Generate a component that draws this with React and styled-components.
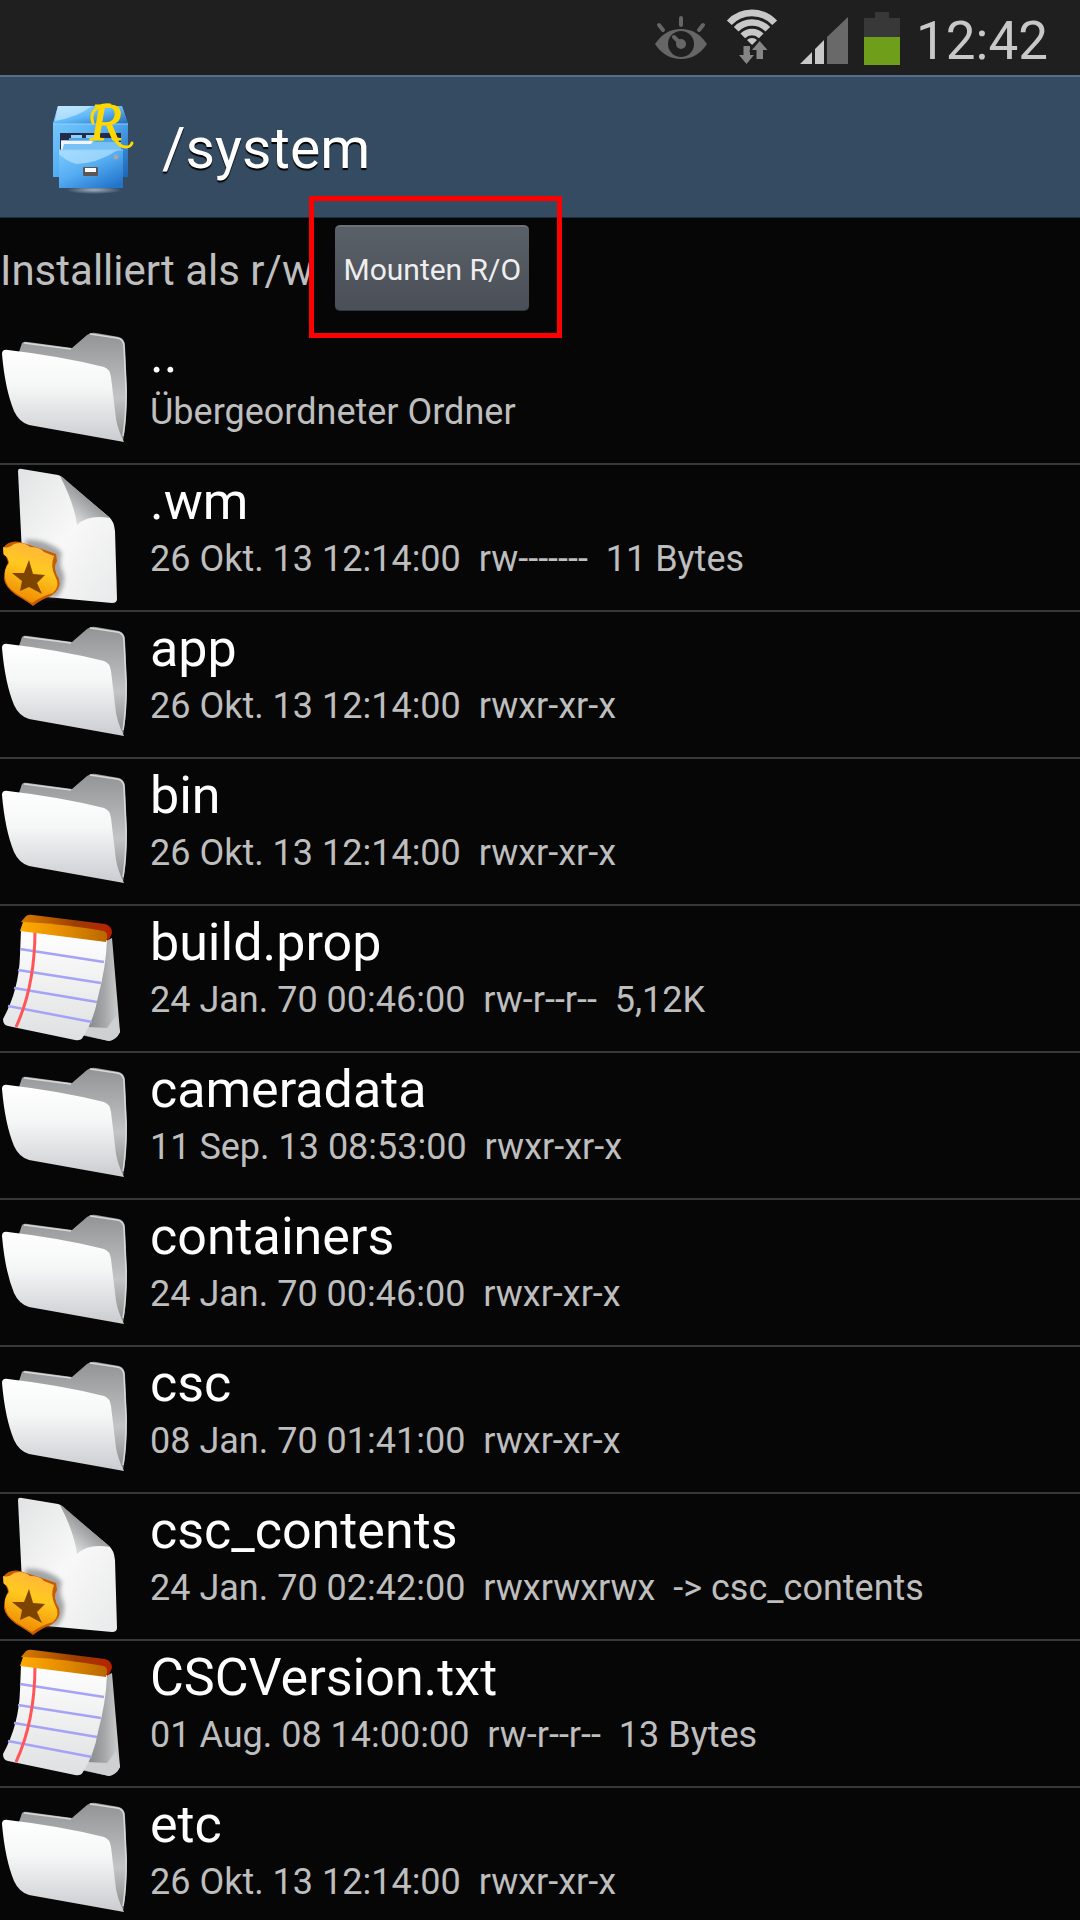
import styled, { createGlobalStyle } from "styled-components";

const GlobalStyle = createGlobalStyle`
  body {
    margin: 0;
    background-color: #060606;
    font-family: Roboto, "Noto Sans", sans-serif;
    overflow: hidden;
  }
`;

const Screen = styled.div`
  height: 100vh;
  overflow: hidden;
  background-color: #060606;
  color: #bebebe;
`;
const StatusBar = styled.div`
  display: flex;
  justify-content: flex-end;
  align-items: center;
  gap: 16px;
  height: 75px;
  padding-right: 32px;
  background-color: #1f1f1f;
`;
const Clock = styled.time`
  color: #c8c8c8;
  font-size: 53px;
  line-height: 64px;
  padding-top: 6px;
`;
const Header = styled.header`
  display: flex;
  align-items: center;
  gap: 24px;
  height: 140px;
  padding-left: 42px;
  background-color: #354b61;
  border-top: 2px solid #54708a;
  border-bottom: 1px solid #1d2c3c;
`;
const Title = styled.h1`
  margin: 0;
  padding-top: 4px;
  color: white;
  font-weight: 400;
  font-size: 57px;
  line-height: 66px;
  text-shadow: 0 2px 1px black;
`;
const MountBar = styled.div`
  display: flex;
  align-items: center;
  gap: 22px;
  height: 100px;
`;
const MountText = styled.span`
  font-size: 42px;
  line-height: 50px;
  padding-top: 6px;
  white-space: nowrap;
`;
const Highlight = styled.div`
  position: relative;
  &::after {
    content: "";
    position: absolute;
    inset: -29px -33px -27px -26px;
    border: 5px solid #fe0000;
    pointer-events: none;
  }
`;
const MountButton = styled.button`
  display: block;
  height: 86px;
  padding: 2px 8px 0;
  border: none;
  border-top: 2px solid #6c7178;
  border-bottom: 1px solid #33383e;
  border-radius: 5px;
  background: linear-gradient(#5a6067, #4b5058);
  color: #eeeeee;
  font-family: inherit;
  font-size: 30px;
  white-space: nowrap;
  cursor: pointer;
`;
const FileList = styled.ul`
  list-style: none;
  margin: 0;
  padding: 0;
`;
const Row = styled.li`
  display: flex;
  gap: 6px;
  height: 145px;
  border-bottom: 2px solid #383838;
`;
const RowText = styled.div`
  display: flex;
  flex-direction: column;
  gap: 6px;
  padding-top: 7px;
`;
const Name = styled.span`
  color: white;
  font-size: 52px;
  line-height: 60px;
`;
const Details = styled.span`
  font-size: 36px;
  line-height: 42px;
  white-space: pre;
`;
const Drawing = styled.svg`
  display: block;
  flex: none;
  overflow: visible;
`;

const EyeIcon = () => (
  <Drawing width="55" height="75" viewBox="654 0 55 75">
    <path d="M654 44Q664 29 680 29T706 44Q696 59 680 59T654 44Z" fill="#666" />
    <circle cx="680" cy="44" r="13" fill="#1f1f1f" />
    <circle cx="680" cy="44" r="5" fill="#666" />
    <path
      d="M673 37L679 43M680 18V25M658 25L662 30M702 25L698 30"
      stroke="#666"
      strokeWidth="4"
      strokeLinecap="round"
    />
  </Drawing>
);

const WifiIcon = () => (
  <Drawing width="58" height="75" viewBox="725 0 58 75">
    <g fill="none" stroke="#c8c8c8" strokeWidth="6.6">
      <path d="M728.3 22.8A31 31 0 0 1 773.7 22.8" />
      <path d="M735.2 29.2A22 22 0 0 1 766.8 29.2" />
      <path d="M741.8 35.8A13 13 0 0 1 760.2 35.8" />
    </g>
    <path d="M746 40A7 7 0 0 1 756 40L751 45Z" fill="#c8c8c8" />
    <g fill="#858585" stroke="#1f1f1f" strokeWidth="3" paintOrder="stroke">
      <path d="M742.5 46H749V55H753L745.5 64L738 55H742.5Z" />
      <path d="M755.5 59H762V50H766.5L758.7 41L751 50H755.5Z" />
    </g>
  </Drawing>
);

const SignalIcon = () => (
  <Drawing width="48" height="75" viewBox="799 0 48 75">
    <path d="M799 64H811V52ZM814 64V49L823 40V64Z" fill="#c8c8c8" />
    <path d="M826 64V37L847 17V64Z" fill="#696969" />
  </Drawing>
);

const BatteryIcon = () => (
  <Drawing width="36" height="75" viewBox="863 0 36 75">
    <path d="M863 18H874V12H888V18H899V37H863Z" fill="#383838" />
    <path d="M863 37H899V65H863Z" fill="#6f9e1b" />
  </Drawing>
);

const CabinetIcon = () => (
  <Drawing width="96" height="96" viewBox="0 0 96 96">
    <defs>
      <linearGradient id="cabTop" x1="0" y1="0" x2="1" y2="1">
        <stop offset="0" stopColor="#a5dcff" />
        <stop offset="0.5" stopColor="#5fb8f8" />
        <stop offset="1" stopColor="#2268b4" />
      </linearGradient>
      <linearGradient id="cabBody" x1="0" y1="0" x2="1" y2="1">
        <stop offset="0" stopColor="#7fd0ff" />
        <stop offset="0.5" stopColor="#55aef4" />
        <stop offset="1" stopColor="#1d65b5" />
      </linearGradient>
      <linearGradient id="cabDrawer" x1="0" y1="0" x2="0.8" y2="1">
        <stop offset="0" stopColor="#7ccaff" />
        <stop offset="0.5" stopColor="#55adf2" />
        <stop offset="1" stopColor="#2375cb" />
      </linearGradient>
      <radialGradient id="cabShadow">
        <stop offset="0" stopColor="#a3aebb" />
        <stop offset="1" stopColor="#a3aebb" stopOpacity="0" />
      </radialGradient>
    </defs>
    <ellipse cx="52" cy="91" rx="28" ry="4" fill="url(#cabShadow)" />
    <path d="M16 7H80L86 25V78H11V25Z" fill="url(#cabBody)" />
    <path d="M16 7H80L86 25H11Z" fill="url(#cabTop)" />
    <path d="M16 7H50Q36 18 13 22Z" fill="#d3f0ff" opacity="0.6" />
    <path d="M11 25H86" stroke="#8fd4fd" />
    <path d="M18 34H79V53H18Z" fill="#252b45" />
    <path d="M29 36H40V40H29ZM44 36H58V40H44Z" fill="#8dd0fb" />
    <path d="M27 39H77V53H27Z" fill="#4ea3e8" />
    <path d="M19 41H50L54 43H79V53H19Z" fill="#78c1f5" />
    <path d="M19 52V42H51L49 45H22L20 52Z" fill="#f2f4f8" />
    <path d="M17 51H81V89H17Z" fill="url(#cabDrawer)" />
    <path d="M17 51H76Q54 65 34 65Q24 62 17 55Z" fill="#c2eaff" opacity="0.6" />
    <path d="M17 51H81" stroke="#8ed2ff" />
    <circle cx="74" cy="58" r="2.500" fill="#a0a7b1" />
    <rect x="41" y="68" width="15" height="9" rx="1" fill="#5d5754" />
    <rect x="43" y="69" width="11" height="4" fill="#fafafa" />
    <text
      x="48"
      y="41"
      fill="#ffd800"
      stroke="#ffd800"
      fontFamily="Liberation Serif, serif"
      fontStyle="italic"
      fontSize="52"
    >
      R
    </text>
    <path
      d="M51 24Q47 13 57 8Q62 5 68 6M72 39Q77 48 84 48Q89 48 90 44"
      fill="none"
      stroke="#ffd800"
      strokeWidth="3"
      strokeLinecap="round"
    />
  </Drawing>
);

const FolderIcon = () => (
  <Drawing width="144" height="144" viewBox="0 0 144 144">
    <defs>
      <linearGradient id="folderBack" x1="0" y1="0" x2="0" y2="1">
        <stop offset="0" stopColor="#929394" />
        <stop offset="0.6" stopColor="#c3c4c6" />
        <stop offset="1" stopColor="#88898b" />
      </linearGradient>
      <linearGradient id="folderFront" x1="0" y1="0" x2="0" y2="1">
        <stop offset="0" stopColor="#ffffff" />
        <stop offset="0.4" stopColor="#f5f6f6" />
        <stop offset="1" stopColor="#cbccd0" />
      </linearGradient>
    </defs>
    <path
      d="M19 34L22 25Q24 23 28 24L72 30L87 17Q91 14 96 15L119 19Q125 21 125 28L127 72Q127 103 123 123Z"
      fill="url(#folderBack)"
    />
    <path
      d="M24 25L71 31M90 16L117 20Q124 21 124 29L126 72Q126 100 123 118"
      fill="none"
      stroke="#d7d8d9"
      strokeWidth="1.500"
    />
    <path
      d="M2 36Q2 31 8 32Q60 38 104 49Q110 51 111 59L116 101Q118 112 124 124L29 107Q19 104 14 93Q5 71 2 36Z"
      fill="url(#folderFront)"
    />
  </Drawing>
);

const SystemFileIcon = () => (
  <Drawing width="144" height="144" viewBox="0 0 144 144">
    <defs>
      <linearGradient id="sheet" x1="0" y1="0" x2="1" y2="1">
        <stop offset="0" stopColor="#e2e3e4" />
        <stop offset="0.5" stopColor="#f8f8f8" />
        <stop offset="1" stopColor="#e8e9ea" />
      </linearGradient>
      <linearGradient id="sheetFold" x1="0.2" y1="0.8" x2="0.7" y2="0.2">
        <stop offset="0" stopColor="#d8d9da" />
        <stop offset="0.4" stopColor="#aeafb0" />
        <stop offset="1" stopColor="#77787a" />
      </linearGradient>
      <linearGradient id="badge" x1="0.6" y1="0" x2="0.3" y2="1">
        <stop offset="0" stopColor="#ffb53d" />
        <stop offset="0.4" stopColor="#ffc91f" />
        <stop offset="1" stopColor="#ee8500" />
      </linearGradient>
      <filter id="badgeShadow" x="-20%" y="-20%" width="140%" height="140%">
        <feGaussianBlur stdDeviation="2" />
      </filter>
    </defs>
    <path
      d="M18 6Q18 3 22 4L58 10Q62 11 66 16L109 52Q114 56 115 66L117 134Q117 138 112 138L24 130Z"
      fill="url(#sheet)"
    />
    <path d="M60 11Q63 12 67 16L110 53Q88 49 77 60Q74 38 60 11Z" fill="url(#sheetFold)" />
    <path
      d="M25 75Q40 73 57 83L62 88Q58 98 64 110Q65 123 57 132L30 131Z"
      fill="#77797c"
      opacity="0.65"
      filter="url(#badgeShadow)"
    />
    <path
      d="M3 83Q9 75 20 77Q32 81 42 84L56 89L57 96Q52 103 59 114Q62 124 51 131Q42 134 33 141Q28 137 16 130Q5 122 4 114Q4 104 8 98Q7 91 3 89Z"
      fill="#c75d00"
    />
    <path
      d="M3 82Q8 84 14 79Q23 76 30 82Q40 82 44 87L54 91Q50 101 55 111Q61 121 53 128Q42 131 32 138Q25 134 17 129Q5 121 5 112Q4 104 9 98Q8 91 4 90Z"
      fill="url(#badge)"
    />
    <path
      d="M29 95L33 109L45 110L37 118L42 129L29 122L20 126L22 116L12 108L24 108Z"
      fill="#7d4400"
    />
  </Drawing>
);

const NoteIcon = () => (
  <Drawing width="144" height="144" viewBox="0 0 144 144">
    <defs>
      <linearGradient id="notePaper" x1="0" y1="0" x2="0" y2="1">
        <stop offset="0" stopColor="#ffffff" />
        <stop offset="1" stopColor="#dfe0e1" />
      </linearGradient>
      <linearGradient id="noteStand" x1="0" y1="0" x2="1" y2="0">
        <stop offset="0" stopColor="#777879" />
        <stop offset="0.6" stopColor="#a5a6a8" />
        <stop offset="1" stopColor="#d0d1d2" />
      </linearGradient>
      <linearGradient id="noteEdge" x1="0" y1="0" x2="1" y2="0">
        <stop offset="0" stopColor="#d97c00" />
        <stop offset="0.6" stopColor="#9c3e00" />
        <stop offset="1" stopColor="#b82000" />
      </linearGradient>
      <linearGradient id="noteTop" x1="0" y1="0" x2="1" y2="0">
        <stop offset="0" stopColor="#ffac00" />
        <stop offset="0.5" stopColor="#e48c00" />
        <stop offset="1" stopColor="#b96700" />
      </linearGradient>
    </defs>
    <path d="M106 35L112 32L120 126Q116 134 109 135L80 129Z" fill="url(#noteStand)" />
    <path d="M88 121L107 122L116 110L120 126Q116 134 109 135L83 129Z" fill="#cfd0d1" />
    <path
      d="M21 24L107 34Q106 61 98 91Q94 114 83 131Q81 135 75 134L8 120Q3 119 3 113Q19 84 20 49Z"
      fill="url(#notePaper)"
    />
    <g fill="none" stroke="#a5a3f6" strokeWidth="2.500">
      <path d="M20 43L104 56" />
      <path d="M18 64L101 77" />
      <path d="M14 82L97 96" />
      <path d="M8 100L92 116" />
    </g>
    <path d="M35 24Q35 80 16 121" fill="none" stroke="#ff5558" strokeWidth="3" />
    <path d="M21 16L26 10Q29 8 33 9L105 18Q112 20 112 27L109 34Z" fill="url(#noteEdge)" />
    <path d="M20 25L23 16Q64 18 104 25Q109 27 106 36Z" fill="url(#noteTop)" />
  </Drawing>
);

const icons = {
  folder: FolderIcon,
  system: SystemFileIcon,
  note: NoteIcon,
};

const files = [
  { icon: "folder", name: "..", details: "Übergeordneter Ordner" },
  { icon: "system", name: ".wm", details: "26 Okt. 13 12:14:00  rw-------  11 Bytes" },
  { icon: "folder", name: "app", details: "26 Okt. 13 12:14:00  rwxr-xr-x" },
  { icon: "folder", name: "bin", details: "26 Okt. 13 12:14:00  rwxr-xr-x" },
  { icon: "note", name: "build.prop", details: "24 Jan. 70 00:46:00  rw-r--r--  5,12K" },
  { icon: "folder", name: "cameradata", details: "11 Sep. 13 08:53:00  rwxr-xr-x" },
  { icon: "folder", name: "containers", details: "24 Jan. 70 00:46:00  rwxr-xr-x" },
  { icon: "folder", name: "csc", details: "08 Jan. 70 01:41:00  rwxr-xr-x" },
  {
    icon: "system",
    name: "csc_contents",
    details: "24 Jan. 70 02:42:00  rwxrwxrwx  -> csc_contents",
  },
  { icon: "note", name: "CSCVersion.txt", details: "01 Aug. 08 14:00:00  rw-r--r--  13 Bytes" },
  { icon: "folder", name: "etc", details: "26 Okt. 13 12:14:00  rwxr-xr-x" },
];

const FileRow = ({ file }) => {
  const Icon = icons[file.icon];
  return (
    <Row>
      <Icon />
      <RowText>
        <Name>{file.name}</Name>
        <Details>{file.details}</Details>
      </RowText>
    </Row>
  );
};

const App = () => {
  return (
    <Screen>
      <GlobalStyle />
      <StatusBar>
        <EyeIcon />
        <WifiIcon />
        <SignalIcon />
        <BatteryIcon />
        <Clock>12:42</Clock>
      </StatusBar>
      <Header>
        <CabinetIcon />
        <Title>/system</Title>
      </Header>
      <MountBar>
        <MountText>Installiert als r/w</MountText>
        <Highlight>
          <MountButton type="button">Mounten R/O</MountButton>
        </Highlight>
      </MountBar>
      <FileList>
        {files.map((file) => (
          <FileRow key={file.name} file={file} />
        ))}
      </FileList>
    </Screen>
  );
};

export default App;
